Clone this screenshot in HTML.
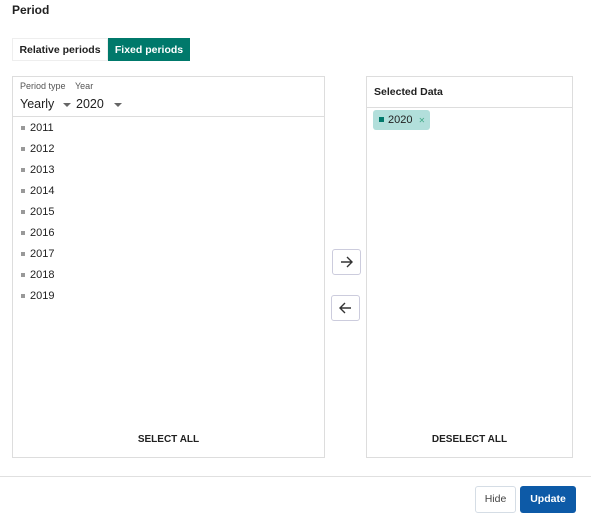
<!DOCTYPE html>
<html><head><style>
*{box-sizing:border-box;margin:0;padding:0}
body{width:591px;height:521px;background:#fff;font-family:"Liberation Sans",Arial,sans-serif;color:#212121;position:relative;overflow:hidden}
.a{position:absolute}
.panel{position:absolute;border:1px solid #ddd;background:#fff}
.item{position:absolute;left:8px;font-size:11px;color:#222}
.item:before{content:"";display:inline-block;width:4px;height:4px;background:#999;margin-right:5px;vertical-align:1px}
.btn{position:absolute;border:1px solid #ccd;border-radius:3px;background:#fff}
</style></head><body>
<div class="a" style="left:12px;top:3px;font-size:12px;font-weight:bold">Period</div>
<div class="a" style="left:12px;top:38px;width:96px;height:23px;border:1px solid #eee;font-size:10.5px;font-weight:bold;line-height:22px;text-align:center">Relative periods</div>
<div class="a" style="left:108px;top:38px;width:82px;height:23px;background:#00796b;color:#fff;font-size:10.5px;font-weight:bold;line-height:24px;text-align:center">Fixed periods</div>

<div class="panel" style="left:12px;top:76px;width:313px;height:382px">
 <div class="a" style="left:7px;top:4px;font-size:9px;color:#555">Period type</div>
 <div class="a" style="left:62px;top:4px;font-size:9px;color:#555">Year</div>
 <div class="a" style="left:7px;top:20px;font-size:12.5px">Yearly</div>
 <div class="a" style="left:50px;top:26px;border:4px solid transparent;border-top:4px solid #666;border-bottom:0"></div>
 <div class="a" style="left:63px;top:20px;font-size:12.5px">2020</div>
 <div class="a" style="left:101px;top:26px;border:4px solid transparent;border-top:4px solid #666;border-bottom:0"></div>
 <div class="a" style="left:0;top:39px;width:311px;border-top:1px solid #ddd"></div>
 <div class="item" style="top:45px">2011</div>
 <div class="item" style="top:66px">2012</div>
 <div class="item" style="top:87px">2013</div>
 <div class="item" style="top:108px">2014</div>
 <div class="item" style="top:129px">2015</div>
 <div class="item" style="top:150px">2016</div>
 <div class="item" style="top:171px">2017</div>
 <div class="item" style="top:192px">2018</div>
 <div class="item" style="top:213px">2019</div>
 <div class="a" style="left:0;width:311px;top:357px;text-align:center;font-size:10px;font-weight:bold">SELECT ALL</div>
</div>

<div class="btn" style="left:332px;top:249px;width:29px;height:26px"><svg width="27" height="24"><path d="M8 12h11M14 7l5 5-5 5" stroke="#333" stroke-width="1.4" fill="none"/></svg></div>
<div class="btn" style="left:331px;top:295px;width:29px;height:26px"><svg width="27" height="24"><path d="M19 12H8M13 7l-5 5 5 5" stroke="#333" stroke-width="1.4" fill="none"/></svg></div>

<div class="panel" style="left:366px;top:76px;width:207px;height:382px">
 <div class="a" style="left:7px;top:9px;font-size:10.5px;font-weight:bold">Selected Data</div>
 <div class="a" style="left:0;top:30px;width:205px;border-top:1px solid #ddd"></div>
 <div class="a" style="left:6px;top:33px;width:57px;height:20px;background:#b2dfdb;border-radius:3px;font-size:11px;line-height:20px;padding-left:6px"><span style="display:inline-block;width:5px;height:5px;background:#00796b;vertical-align:1px;margin-right:4px"></span>2020 <span style="font-size:8px;color:#4a8;margin-left:3px">✕</span></div>
 <div class="a" style="left:0;width:205px;top:357px;text-align:center;font-size:10px;font-weight:bold">DESELECT ALL</div>
</div>

<div class="a" style="left:0;top:476px;width:591px;border-top:1px solid #e0e0e0"></div>
<div class="btn" style="left:475px;top:486px;width:41px;height:27px;border-color:#d5dde5;font-size:10.5px;color:#444;text-align:center;line-height:25px">Hide</div>
<div class="a" style="left:520px;top:486px;width:56px;height:27px;background:#0d5aa7;border-radius:3px;color:#fff;font-size:10.5px;font-weight:bold;text-align:center;line-height:27px">Update</div>
</body></html>
